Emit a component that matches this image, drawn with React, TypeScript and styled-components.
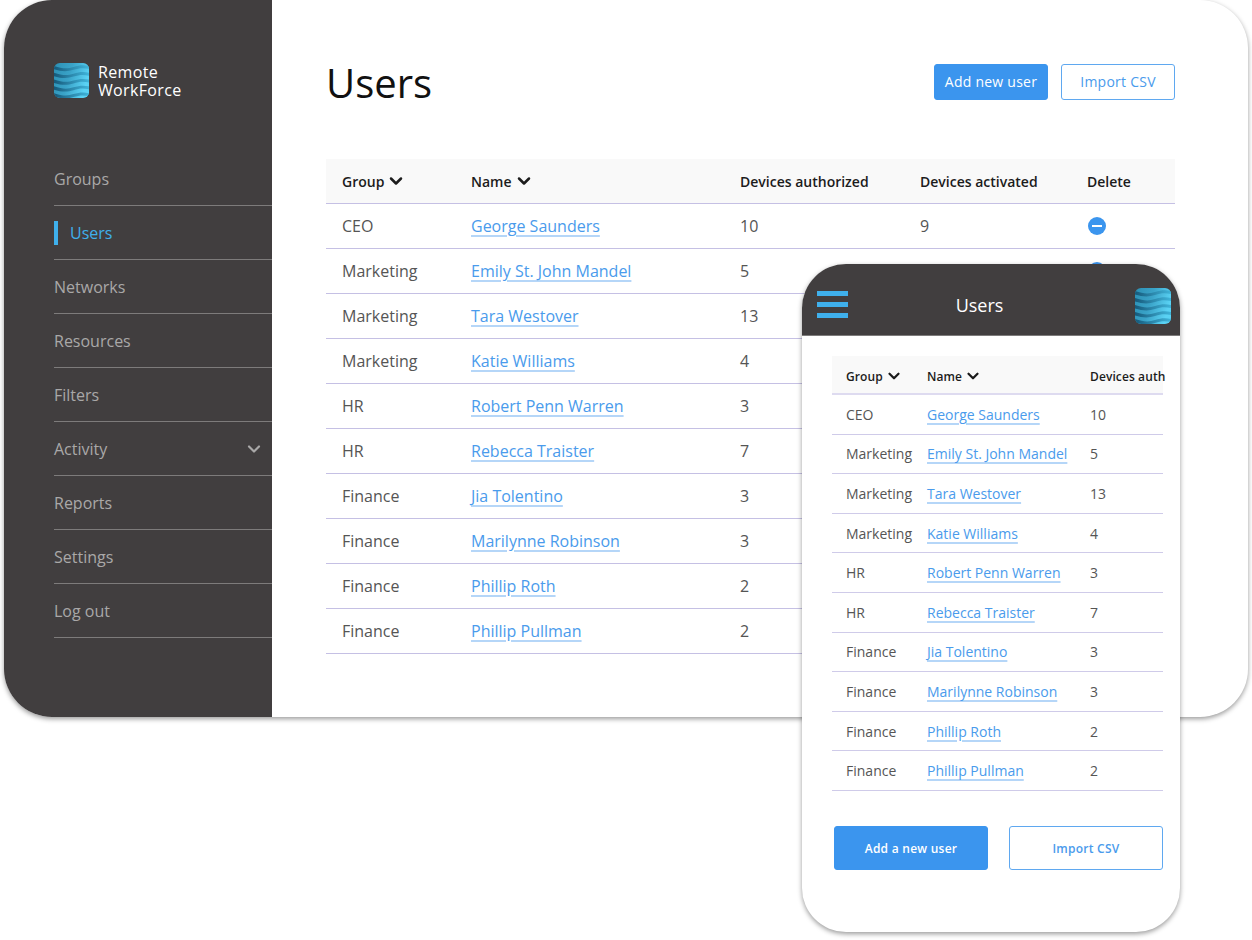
import * as React from "react"
import styled, { createGlobalStyle } from "styled-components"
import { ChevronDown } from "lucide-react"

const GlobalStyle = createGlobalStyle`
  html, body {
    margin: 0;
    padding: 0;
    background: #fff;
  }
  body {
    font-family: "Open Sans", "Noto Sans", sans-serif;
    color: #555;
  }
`

const Page = styled.div`
  position: relative;
  width: 1252px;
  height: 940px;
  overflow: hidden;
  padding-left: 4px;
  box-sizing: border-box;
`

const Desktop = styled.div`
  width: 1244px;
  height: 717px;
  display: flex;
  background: #fff;
  border-radius: 48px;
  overflow: hidden;
  box-shadow: 0 2px 5px rgba(0, 0, 0, 0.4);
`

const Sidebar = styled.aside`
  width: 268px;
  flex: none;
  background: #413e3f;
  padding: 63px 0 0 50px;
  box-sizing: border-box;
`

const Brand = styled.div`
  display: flex;
  align-items: center;
  gap: 9px;
  height: 35px;
`

const BrandName = styled.div`
  color: #fff;
  font-size: 16px;
  font-weight: 500;
  line-height: 18px;
  letter-spacing: 0.35px;
`

const Nav = styled.nav`
  margin-top: 54px;
`

const NavItem = styled.div<{ $active?: boolean }>`
  height: 54px;
  box-sizing: border-box;
  border-bottom: 1px solid #7d7b7b;
  display: flex;
  align-items: center;
  justify-content: space-between;
  padding-right: 8px;
  font-size: 16px;
  color: ${(p) => (p.$active ? "#3fb0ec" : "#a9a8a8")};
  font-weight: ${(p) => (p.$active ? 500 : 400)};
`

const ActiveMark = styled.span`
  display: flex;
  align-items: center;
  height: 24px;
  border-left: 4px solid #3fb0ec;
  padding-left: 12px;
`

const Main = styled.main`
  flex: 1;
  padding: 0 73px 0 54px;
`

const Head = styled.header`
  height: 159px;
  display: flex;
  justify-content: space-between;
  padding-top: 55px;
  box-sizing: border-box;
`

const Title = styled.h1`
  margin: 0;
  font-size: 40px;
  line-height: 56px;
  font-weight: 400;
  color: #111;
`

const Actions = styled.div`
  display: flex;
  gap: 13px;
  padding-top: 9px;
`

const Button = styled.button<{ $outline?: boolean; $large?: boolean }>`
  width: ${(p) => (p.$large ? "154px" : "114px")};
  height: ${(p) => (p.$large ? "44px" : "36px")};
  box-sizing: border-box;
  padding: ${(p) => (p.$large ? "1px 0 0" : "0 0 2px")};
  border-radius: 3px;
  border: 1px solid ${(p) => (p.$outline ? "#5fa8f0" : "#3b95ee")};
  background: ${(p) => (p.$outline ? "#fff" : "#3b95ee")};
  color: ${(p) => (p.$outline ? "#4a9bec" : "#fff")};
  font-family: inherit;
  font-size: ${(p) => (p.$large ? "12px" : "14px")};
  font-weight: ${(p) => (p.$large ? 600 : 500)};
  letter-spacing: 0.25px;
`

const columns = "129px 269px 180px 167px 104px"
const phoneColumns = "81px 163px 80px"

const HeaderRow = styled.div`
  display: grid;
  grid-template-columns: ${columns};
  height: 45px;
  align-items: center;
  background: #f9f9f9;
  border-bottom: 1px solid #c5c0e4;
  box-sizing: border-box;
`

const HeaderCell = styled.div`
  display: flex;
  align-items: center;
  gap: 2px;
  height: 20px;
  padding-left: 16px;
  font-size: 14px;
  font-weight: 600;
  color: #1c1c1c;
  white-space: nowrap;
`

const Row = styled.div`
  display: grid;
  grid-template-columns: ${columns};
  height: 45px;
  align-items: center;
  border-bottom: 1px solid #c5c0e4;
  box-sizing: border-box;
  font-size: 16px;
`

const Cell = styled.div`
  padding-left: 16px;
  white-space: nowrap;
`

const UserLink = styled.a`
  color: #4a9bec;
  text-decoration: underline;
  text-decoration-color: #b5d6f8;
  text-underline-offset: 3px;
  text-decoration-thickness: 2px;
`

const DeleteIcon = styled.span`
  display: block;
  width: 18px;
  height: 18px;
  margin-left: 1px;
  border-radius: 50%;
  background: #3b95ee;
  position: relative;
  &::after {
    content: "";
    position: absolute;
    left: 4px;
    right: 4px;
    top: 8px;
    height: 2px;
    background: #fff;
  }
`

const Phone = styled.section`
  position: absolute;
  left: 802px;
  top: 264px;
  width: 378px;
  height: 668px;
  background: #fff;
  border-radius: 44px;
  overflow: hidden;
  box-shadow: 0 2px 5px rgba(0, 0, 0, 0.4);
`

const PhoneBar = styled.header`
  height: 72px;
  box-sizing: border-box;
  background: #413e3f;
  border-bottom: 1px solid #7d7b7b;
  display: flex;
  align-items: center;
  justify-content: space-between;
  padding: 10px 9px 0 15px;
`

const Burger = styled.div`
  display: flex;
  flex-direction: column;
  gap: 6.5px;
  width: 31px;
  span {
    height: 4.5px;
    background: #3fb0ec;
  }
`

const PhoneTitle = styled.div`
  color: #fff;
  font-size: 18px;
  font-weight: 500;
  margin-right: 24px;
`

const PhoneLogo = styled.div`
  display: flex;
  margin-top: 2px;
`

const PhoneBody = styled.div`
  padding: 20px 17px 0 30px;
`

const PhoneHeaderRow = styled.div`
  display: grid;
  grid-template-columns: ${phoneColumns};
  width: 331px;
  height: 39px;
  align-items: center;
  background: #f9f9f9;
  border-bottom: 2px solid #dedbf0;
  box-sizing: border-box;
`

const PhoneHeaderCell = styled.div`
  display: flex;
  align-items: center;
  gap: 2px;
  height: 18px;
  padding: 3px 0 0 14px;
  font-size: 12px;
  font-weight: 600;
  letter-spacing: 0.1px;
  color: #1c1c1c;
  white-space: nowrap;
`

const PhoneRow = styled.div`
  display: grid;
  grid-template-columns: ${phoneColumns};
  width: 331px;
  height: 39.6px;
  align-items: center;
  border-bottom: 1px solid #cfcbe9;
  box-sizing: border-box;
  font-size: 14px;
`

const PhoneCell = styled.div`
  padding-left: 14px;
  white-space: nowrap;
`

const PhoneActions = styled.div`
  display: flex;
  justify-content: space-between;
  margin: 35px 0 0 2px;
  width: 329px;
`

function Logo({ id, size }: { id: string; size: number }) {
  const waves = [3, 10, 17, 24, 31]
  return (
    <svg width={size} height={size} viewBox="0 0 36 36">
      <defs>
        <linearGradient id={`${id}-base`} x1="0" y1="0" x2="1" y2="0.3">
          <stop offset="0" stopColor="#2c8fb3" />
          <stop offset="0.5" stopColor="#3aa3c8" />
          <stop offset="1" stopColor="#5ad2f4" />
        </linearGradient>
        <linearGradient id={`${id}-wave`} x1="0" y1="0" x2="1" y2="0">
          <stop offset="0" stopColor="#15597a" />
          <stop offset="0.45" stopColor="#2a84a8" />
          <stop offset="1" stopColor="#3fb4da" />
        </linearGradient>
        <clipPath id={`${id}-clip`}>
          <rect width="36" height="36" rx="6" />
        </clipPath>
      </defs>
      <g clipPath={`url(#${id}-clip)`}>
        <rect width="36" height="36" fill={`url(#${id}-base)`} />
        {waves.map((y) => (
          <path
            key={y}
            d={`M0 ${y}C9 ${y + 3} 14 ${y + 3} 20 ${y + 1}C26 ${y - 1} 31 ${y - 1} 36 ${y}V${y + 3}C30 ${y + 2} 26 ${y + 2} 20 ${y + 4}C14 ${y + 6} 8 ${y + 6} 0 ${y + 3.5}Z`}
            fill={`url(#${id}-wave)`}
          />
        ))}
      </g>
    </svg>
  )
}

const nav = ["Groups", "Users", "Networks", "Resources", "Filters", "Activity", "Reports", "Settings", "Log out"]

const users = [
  { group: "CEO", name: "George Saunders", authorized: 10, activated: 9 },
  { group: "Marketing", name: "Emily St. John Mandel", authorized: 5, activated: 5 },
  { group: "Marketing", name: "Tara Westover", authorized: 13, activated: 12 },
  { group: "Marketing", name: "Katie Williams", authorized: 4, activated: 4 },
  { group: "HR", name: "Robert Penn Warren", authorized: 3, activated: 3 },
  { group: "HR", name: "Rebecca Traister", authorized: 7, activated: 6 },
  { group: "Finance", name: "Jia Tolentino", authorized: 3, activated: 3 },
  { group: "Finance", name: "Marilynne Robinson", authorized: 3, activated: 2 },
  { group: "Finance", name: "Phillip Roth", authorized: 2, activated: 2 },
  { group: "Finance", name: "Phillip Pullman", authorized: 2, activated: 1 },
]

export default function App() {
  return (
    <Page>
      <GlobalStyle />
      <Desktop>
        <Sidebar>
          <Brand>
            <Logo id="side" size={35} />
            <BrandName>
              Remote
              <br />
              WorkForce
            </BrandName>
          </Brand>
          <Nav>
            {nav.map((item) => (
              <NavItem key={item} $active={item === "Users"}>
                {item === "Users" ? <ActiveMark>{item}</ActiveMark> : item}
                {item === "Activity" && <ChevronDown size={20} strokeWidth={2.6} />}
              </NavItem>
            ))}
          </Nav>
        </Sidebar>
        <Main>
          <Head>
            <Title>Users</Title>
            <Actions>
              <Button>Add new user</Button>
              <Button $outline>Import CSV</Button>
            </Actions>
          </Head>
          <HeaderRow>
            <HeaderCell>
              Group <ChevronDown size={20} strokeWidth={3} />
            </HeaderCell>
            <HeaderCell>
              Name <ChevronDown size={20} strokeWidth={3} />
            </HeaderCell>
            <HeaderCell>Devices authorized</HeaderCell>
            <HeaderCell>Devices activated</HeaderCell>
            <HeaderCell>Delete</HeaderCell>
          </HeaderRow>
          {users.map((user) => (
            <Row key={user.name}>
              <Cell>{user.group}</Cell>
              <Cell>
                <UserLink>{user.name}</UserLink>
              </Cell>
              <Cell>{user.authorized}</Cell>
              <Cell>{user.activated}</Cell>
              <Cell>
                <DeleteIcon />
              </Cell>
            </Row>
          ))}
        </Main>
      </Desktop>
      <Phone>
        <PhoneBar>
          <Burger>
            <span />
            <span />
            <span />
          </Burger>
          <PhoneTitle>Users</PhoneTitle>
          <PhoneLogo>
            <Logo id="phone" size={36} />
          </PhoneLogo>
        </PhoneBar>
        <PhoneBody>
          <PhoneHeaderRow>
            <PhoneHeaderCell>
              Group <ChevronDown size={18} strokeWidth={3} />
            </PhoneHeaderCell>
            <PhoneHeaderCell>
              Name <ChevronDown size={18} strokeWidth={3} />
            </PhoneHeaderCell>
            <PhoneHeaderCell>Devices auth</PhoneHeaderCell>
          </PhoneHeaderRow>
          {users.map((user) => (
            <PhoneRow key={user.name}>
              <PhoneCell>{user.group}</PhoneCell>
              <PhoneCell>
                <UserLink>{user.name}</UserLink>
              </PhoneCell>
              <PhoneCell>{user.authorized}</PhoneCell>
            </PhoneRow>
          ))}
          <PhoneActions>
            <Button $large>Add a new user</Button>
            <Button $large $outline>
              Import CSV
            </Button>
          </PhoneActions>
        </PhoneBody>
      </Phone>
    </Page>
  )
}
